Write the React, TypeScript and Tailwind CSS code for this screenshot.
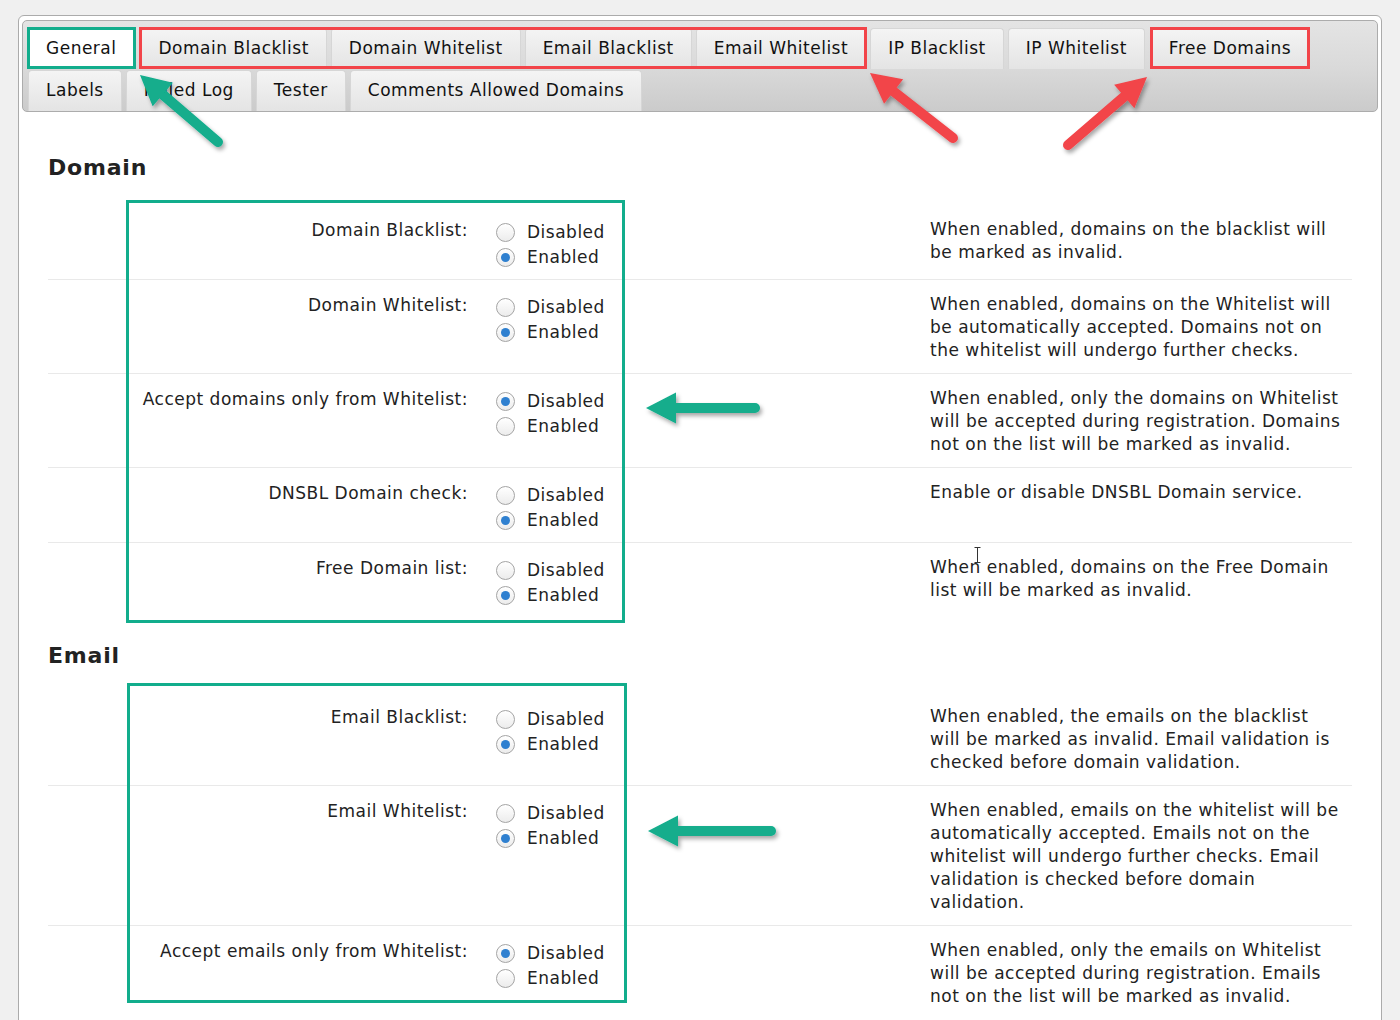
import React from 'react';

type Row = {
  label: string;
  enabled: boolean;
  desc: string;
};

const domainRows: Row[] = [
  { label: 'Domain Blacklist:', enabled: true, desc: 'When enabled, domains on the blacklist will be marked as invalid.' },
  { label: 'Domain Whitelist:', enabled: true, desc: 'When enabled, domains on the Whitelist will be automatically accepted. Domains not on the whitelist will undergo further checks.' },
  { label: 'Accept domains only from Whitelist:', enabled: false, desc: 'When enabled, only the domains on Whitelist will be accepted during registration. Domains not on the list will be marked as invalid.' },
  { label: 'DNSBL Domain check:', enabled: true, desc: 'Enable or disable DNSBL Domain service.' },
  { label: 'Free Domain list:', enabled: true, desc: 'When enabled, domains on the Free Domain list will be marked as invalid.' },
];

const emailRows: Row[] = [
  { label: 'Email Blacklist:', enabled: true, desc: 'When enabled, the emails on the blacklist will be marked as invalid. Email validation is checked before domain validation.' },
  { label: 'Email Whitelist:', enabled: true, desc: 'When enabled, emails on the whitelist will be automatically accepted. Emails not on the whitelist will undergo further checks. Email validation is checked before domain validation.' },
  { label: 'Accept emails only from Whitelist:', enabled: false, desc: 'When enabled, only the emails on Whitelist will be accepted during registration. Emails not on the list will be marked as invalid.' },
];

const Tab: React.FC<{ label: string; active?: boolean }> = ({ label, active }) => (
  <div
    className={`h-[41px] px-[17px] flex items-center rounded-t-[4px] border border-b-0 border-[#d6d6d6] text-[17px] text-[#111] whitespace-nowrap ${
      active ? 'bg-white' : 'bg-linear-to-b from-[#f4f4f4] to-[#e4e4e4]'
    }`}
  >
    {label}
  </div>
);

const Radio: React.FC<{ checked: boolean; label: string }> = ({ checked, label }) => (
  <div className="flex items-center h-[25px]">
    <span className="w-[19px] h-[19px] rounded-full border border-[#a4a4a4] bg-linear-to-b from-white to-[#ececec] flex items-center justify-center">
      {checked && <span className="w-[9px] h-[9px] rounded-full bg-[#2f80d0]" />}
    </span>
    <span className="ml-[12px]">{label}</span>
  </div>
);

const SettingRow: React.FC<{ row: Row; first?: boolean }> = ({ row, first }) => (
  <div className={`grid grid-cols-[432px_438px_1fr] pt-[13px] pb-[11px] ${first ? '' : 'border-t border-[#e9e9e9]'}`}>
    <div className="text-right pr-[12px] leading-[23px] pt-[1px]">{row.label}</div>
    <div className="pl-[16px] pt-[2px] -mb-[2px]">
      <Radio checked={!row.enabled} label="Disabled" />
      <Radio checked={row.enabled} label="Enabled" />
    </div>
    <div className="pl-[12px] leading-[23px] pr-[11px]">{row.desc}</div>
  </div>
);

// annotation arrow: shaft + triangle head, from tail to tip
const Arrow: React.FC<{ x1: number; y1: number; x2: number; y2: number; color: string }> = ({ x1, y1, x2, y2, color }) => {
  const dx = x2 - x1;
  const dy = y2 - y1;
  const len = Math.sqrt(dx * dx + dy * dy);
  const ux = dx / len;
  const uy = dy / len;
  const headLen = 30;
  const headW = 31;
  const bx = x2 - ux * headLen;
  const by = y2 - uy * headLen;
  const nx = -uy;
  const ny = ux;
  const pts = `${x2},${y2} ${bx + (nx * headW) / 2},${by + (ny * headW) / 2} ${bx - (nx * headW) / 2},${by - (ny * headW) / 2}`;
  return (
    <g filter="url(#shadow)">
      <line x1={x1} y1={y1} x2={bx + ux * 3} y2={by + uy * 3} stroke={color} strokeWidth={10} strokeLinecap="round" />
      <polygon points={pts} fill={color} strokeLinejoin="round" />
    </g>
  );
};

const App: React.FC = () => {
  return (
    <div className="relative min-h-screen h-[1020px] overflow-hidden bg-[#f0f0f0] font-['DejaVu_Sans',Verdana,sans-serif] text-[17px] tracking-[0.5px] text-[#222]">
      <div className="pt-[15px] px-[18px]">
        <div className="bg-white border border-[#ababab] rounded-t-[6px] px-[3px] pt-[4px] min-h-[1100px]">
          {/* tab bar */}
          <div className="rounded-[5px] border border-[#acacac] bg-linear-to-b from-[#e4e4e4] via-[#dadada] to-[#cbcbcb] pl-[5px] pt-[7px]">
            <div className="flex gap-[4px]">
              <div className="relative">
                <Tab label="General" active />
                <div className="absolute -inset-x-[1px] -top-[1px] bottom-0 border-[3px] border-[#12ad8c]" />
              </div>
              <div className="relative flex gap-[4px] ml-[2px]">
                <Tab label="Domain Blacklist" />
                <Tab label="Domain Whitelist" />
                <Tab label="Email Blacklist" />
                <Tab label="Email Whitelist" />
                <div className="absolute -left-[2px] -right-[1px] -top-[1px] bottom-0 border-[3px] border-[#f24449]" />
              </div>
              <Tab label="IP Blacklist" />
              <Tab label="IP Whitelist" />
              <div className="relative ml-[2px]">
                <Tab label="Free Domains" />
                <div className="absolute -inset-x-[1px] -top-[1px] bottom-0 border-[3px] border-[#f24449]" />
              </div>
            </div>
            <div className="flex gap-[4px] mt-[1px]">
              <Tab label="Labels" />
              <Tab label="Failed Log" />
              <Tab label="Tester" />
              <Tab label="Comments Allowed Domains" />
            </div>
          </div>

          {/* settings */}
          <div className="px-[26px] pt-[42px]">
            <h2 className="text-[22px] leading-[28px] font-bold tracking-[0.8px] text-[#222] mb-[23px]">Domain</h2>
            <div className="relative">
              {domainRows.map((r, i) => (
                <SettingRow key={r.label} row={r} first={i === 0} />
              ))}
              <div className="absolute left-[78px] w-[499px] -top-[5px] -bottom-[6px] border-[3px] border-[#12ad8c]" />
            </div>

            <h2 className="text-[22px] leading-[28px] font-bold tracking-[0.8px] text-[#222] mt-[25px] mb-[22px]">Email</h2>
            <div className="relative">
              {emailRows.map((r, i) => (
                <SettingRow key={r.label} row={r} first={i === 0} />
              ))}
              <div className="absolute left-[79px] w-[500px] -top-[9px] h-[320px] border-[3px] border-[#12ad8c]" />
            </div>
          </div>
        </div>
      </div>

      {/* annotation arrows */}
      <svg className="absolute top-0 left-0 pointer-events-none" width={1400} height={1020}>
        <defs>
          <filter id="shadow" x="-20%" y="-20%" width="140%" height="140%">
            <feDropShadow dx="2" dy="3" stdDeviation="2" floodColor="#000" floodOpacity="0.35" />
          </filter>
        </defs>
        <Arrow x1={218} y1={142} x2={140} y2={75} color="#12ad8c" />
        <Arrow x1={953} y1={138} x2={870} y2={73} color="#f24449" />
        <Arrow x1={1068} y1={145} x2={1147} y2={77} color="#f24449" />
        <Arrow x1={755} y1={408} x2={646} y2={408} color="#12ad8c" />
        <Arrow x1={771} y1={831} x2={648} y2={831} color="#12ad8c" />
        {/* text cursor */}
        <g stroke="#333" strokeWidth={1} fill="none">
          <line x1={977.5} y1={548} x2={977.5} y2={562} />
          <line x1={974.5} y1={547.5} x2={980.5} y2={547.5} />
          <line x1={974.5} y1={562.5} x2={980.5} y2={562.5} />
        </g>
      </svg>
    </div>
  );
};

export default App;
